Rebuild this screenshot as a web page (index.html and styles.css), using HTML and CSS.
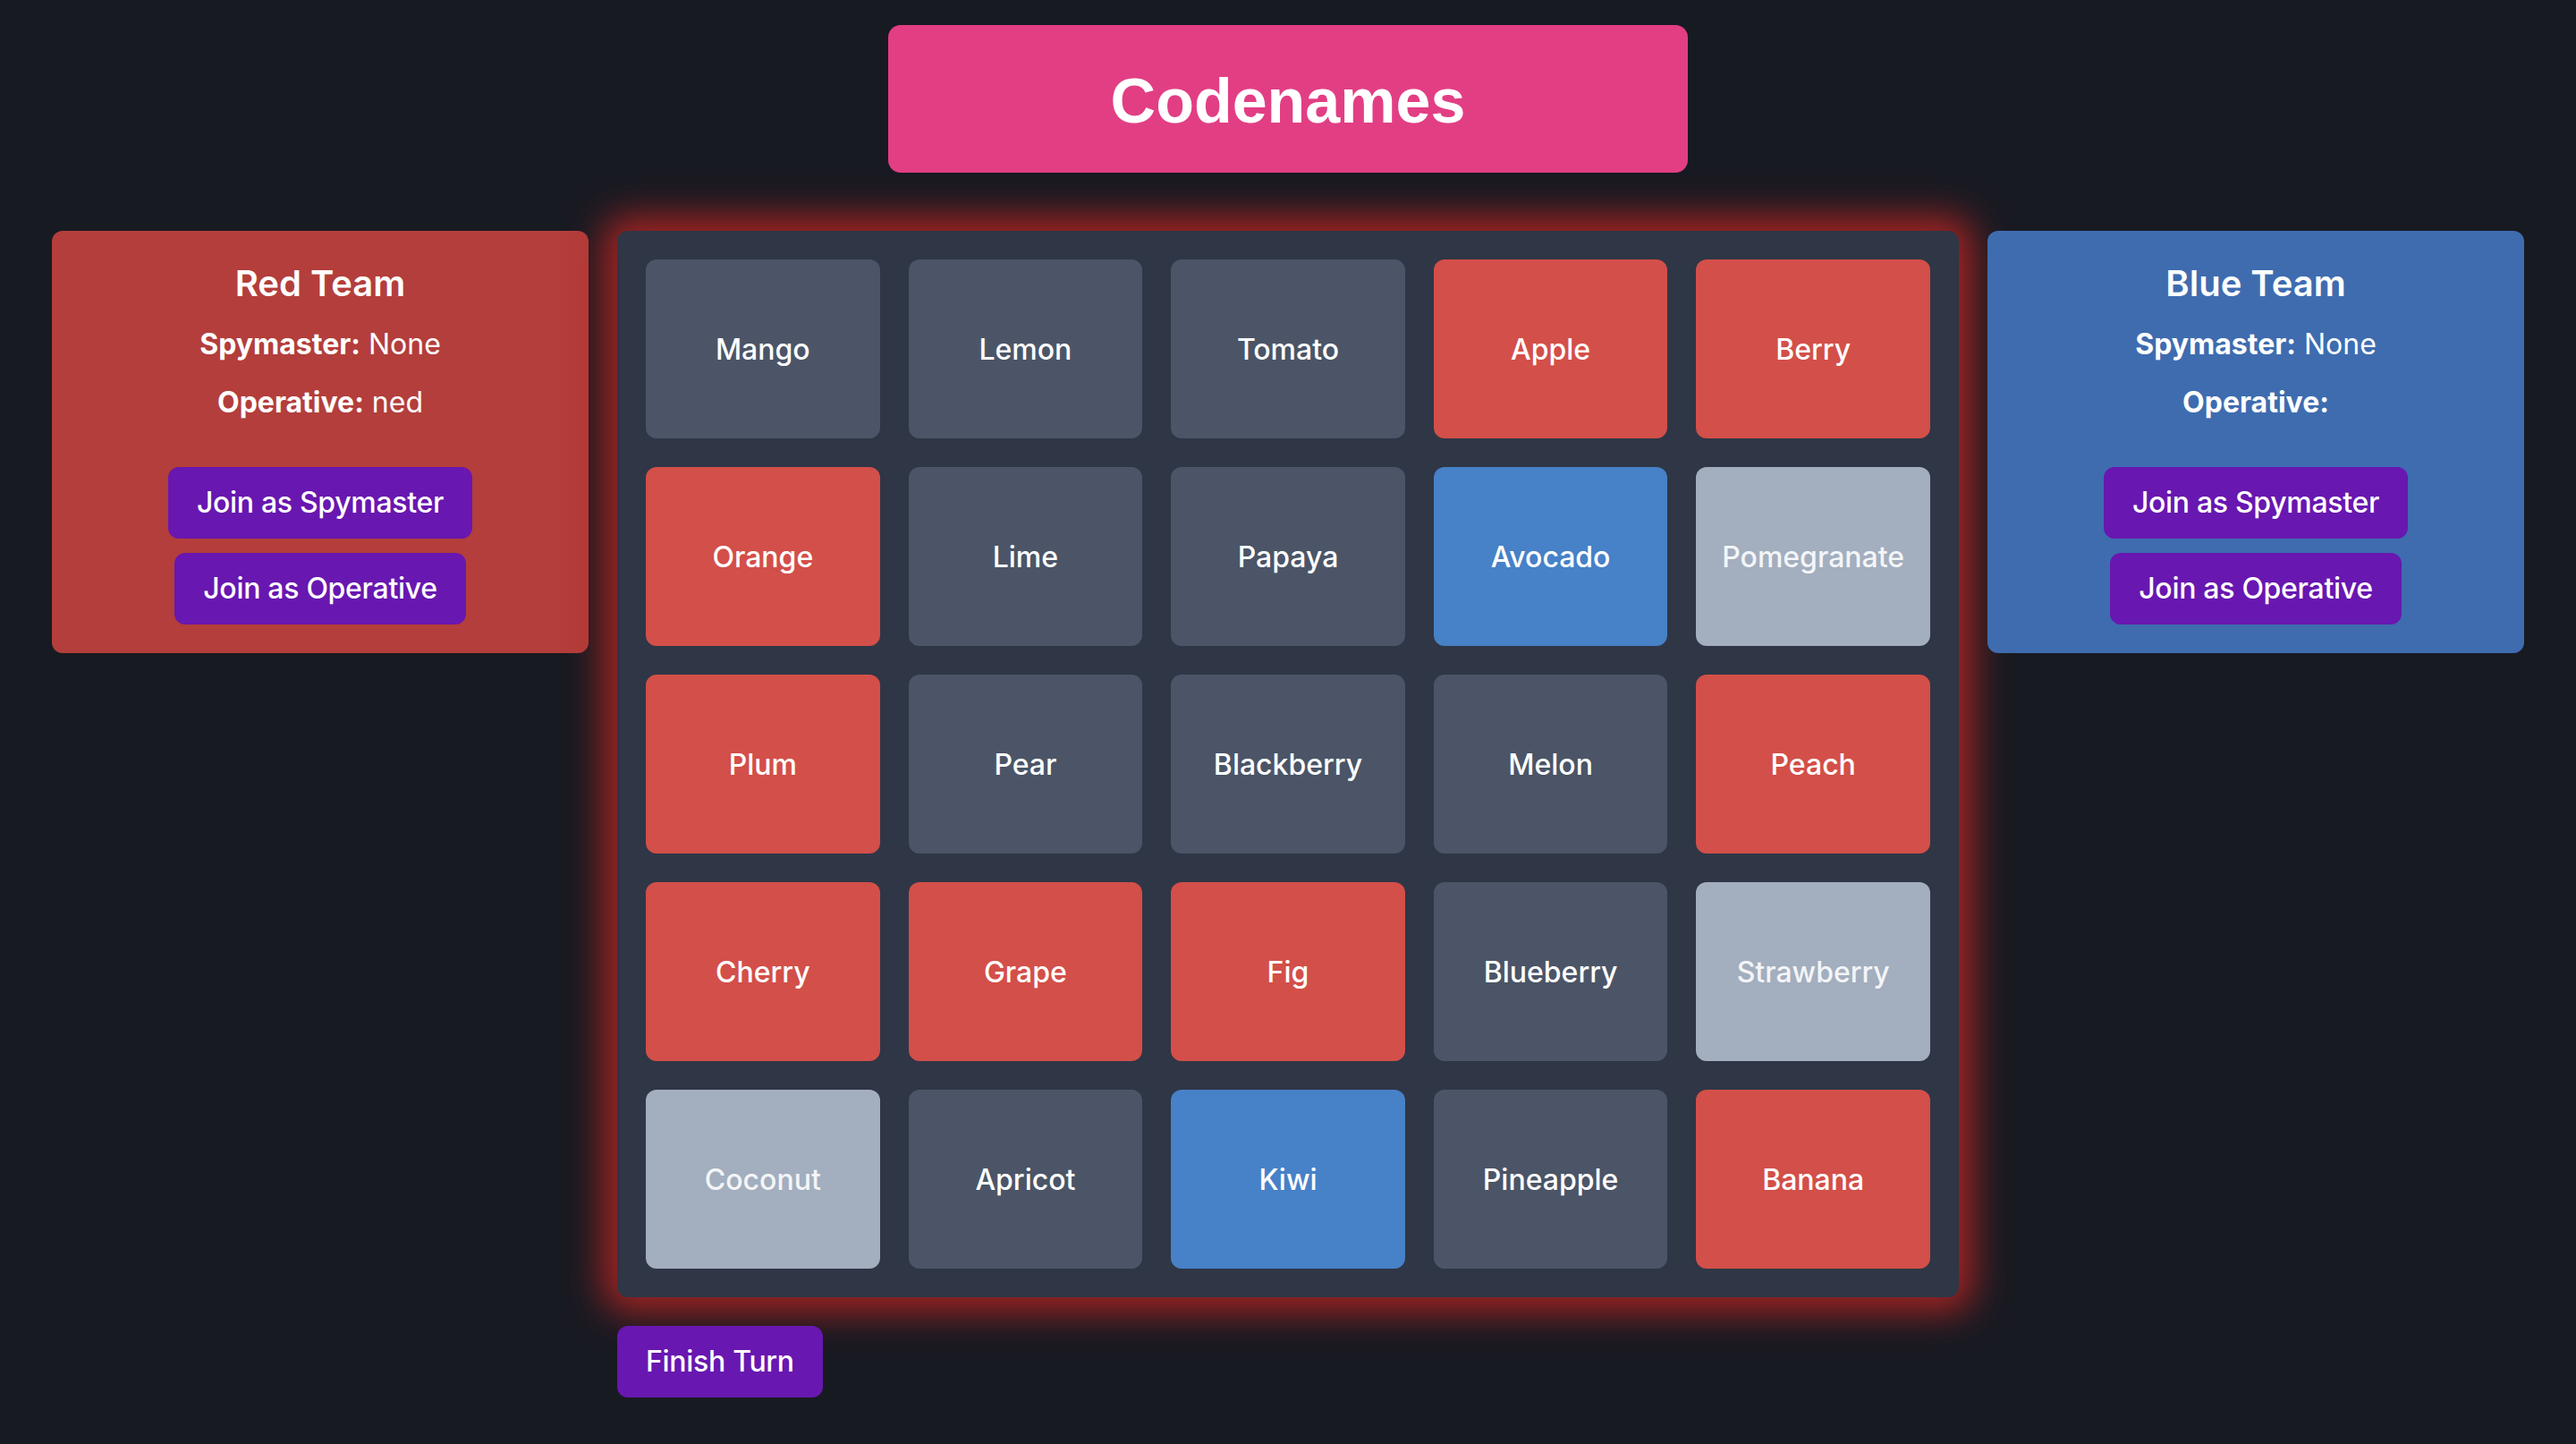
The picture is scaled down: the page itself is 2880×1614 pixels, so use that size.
FILE: index.html
```html
<!DOCTYPE html>
<html lang="en">
<head>
    <meta charset="UTF-8">
    <meta name="viewport" content="width=device-width, initial-scale=1.0">
    <title>Codenames</title>
    <link rel="stylesheet" href="styles.css">
</head>
<body>

    <div class="app">
        <h1 class="title">Codenames</h1>

        <div class="main">
            <div class="team team-red">
                <h2>Red Team</h2>
                <p><strong>Spymaster:</strong> None</p>
                <p><strong>Operative:</strong> ned</p>
                <div class="team-actions">
                    <button>Join as Spymaster</button>
                    <button>Join as Operative</button>
                </div>
            </div>

            <div class="center">
                <div class="board">
                    <div class="card neutral">Mango</div>
                    <div class="card neutral">Lemon</div>
                    <div class="card neutral">Tomato</div>
                    <div class="card red">Apple</div>
                    <div class="card red">Berry</div>

                    <div class="card red">Orange</div>
                    <div class="card neutral">Lime</div>
                    <div class="card neutral">Papaya</div>
                    <div class="card blue">Avocado</div>
                    <div class="card light">Pomegranate</div>

                    <div class="card red">Plum</div>
                    <div class="card neutral">Pear</div>
                    <div class="card neutral">Blackberry</div>
                    <div class="card neutral">Melon</div>
                    <div class="card red">Peach</div>

                    <div class="card red">Cherry</div>
                    <div class="card red">Grape</div>
                    <div class="card red">Fig</div>
                    <div class="card neutral">Blueberry</div>
                    <div class="card light">Strawberry</div>

                    <div class="card light">Coconut</div>
                    <div class="card neutral">Apricot</div>
                    <div class="card blue">Kiwi</div>
                    <div class="card neutral">Pineapple</div>
                    <div class="card red">Banana</div>
                </div>
                <button class="finish">Finish Turn</button>
            </div>

            <div class="team team-blue">
                <h2>Blue Team</h2>
                <p><strong>Spymaster:</strong> None</p>
                <p><strong>Operative:</strong> </p>
                <div class="team-actions">
                    <button>Join as Spymaster</button>
                    <button>Join as Operative</button>
                </div>
            </div>
        </div>
    </div>

</body>
</html>
```

FILE: styles.css
```css
body {
    margin: 0;
    background-color: #181a22;
    color: white;
    font-family: Inter, "Noto Sans", sans-serif;
}
.app {
    display: flex;
    flex-direction: column;
    align-items: center;
    padding-top: 28px;
    min-height: 1586px;
}
.title {
    width: 894px;
    box-sizing: border-box;
    margin: 0 0 65px 0;
    padding: 45px 0 40px 0;
    background-color: #e23e84;
    border-radius: 14px;
    font-family: "Liberation Sans", Arial, sans-serif;
    font-size: 70px;
    line-height: 80px;
    font-weight: bold;
    text-align: center;
}
.main {
    display: flex;
    align-items: flex-start;
    justify-content: center;
    gap: 32px;
}
.team {
    width: 600px;
    box-sizing: border-box;
    padding: 32px;
    border-radius: 12px;
    text-align: center;
}
.team-red {
    background-color: #b33e3b;
}
.team-blue {
    background-color: #3e6caf;
}
.team h2 {
    margin: 0;
    font-size: 40px;
    line-height: 54px;
    font-weight: 600;
}
.team p {
    margin: 17px 0 0 0;
    font-size: 32px;
    line-height: 48px;
}
.team p strong {
    font-weight: 700;
}
.team-actions {
    display: flex;
    flex-direction: column;
    align-items: center;
    gap: 16px;
    margin-top: 48px;
}
button {
    background-color: #6817b0;
    color: white;
    border: none;
    border-radius: 12px;
    padding: 16px 32px;
    font-family: Inter, "Noto Sans", sans-serif;
    font-size: 32px;
    line-height: 48px;
    font-weight: 500;
    letter-spacing: -0.3px;
    cursor: pointer;
}
.center {
    display: flex;
    flex-direction: column;
    align-items: flex-start;
}
.board {
    width: 1500px;
    box-sizing: border-box;
    padding: 32px;
    display: grid;
    grid-template-columns: repeat(5, 1fr);
    gap: 32px;
    background-color: #2f3646;
    border-radius: 12px;
    box-shadow: 0 0 40px 16px rgba(190, 38, 34, 0.85);
}
.card {
    height: 200px;
    display: flex;
    align-items: center;
    justify-content: center;
    border-radius: 12px;
    font-size: 32px;
    font-weight: 500;
}
.card.neutral {
    background-color: #4b5567;
}
.card.red {
    background-color: #d34f49;
}
.card.blue {
    background-color: #4781c7;
}
.card.light {
    background-color: #a3aebe;
    color: #f3f5f8;
}
.finish {
    margin-top: 32px;
}
```
